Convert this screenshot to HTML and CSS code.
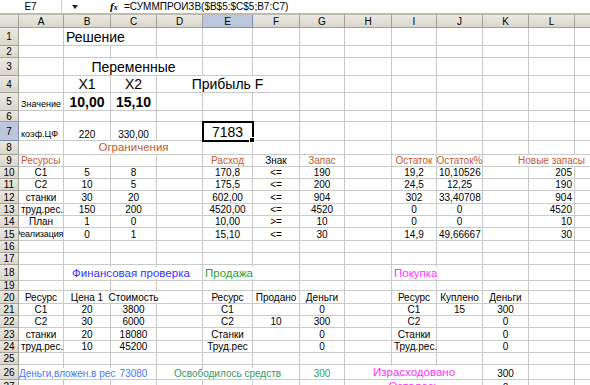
FILE: index.html
```html
<!DOCTYPE html>
<html lang="ru">
<head>
  <meta charset="UTF-8">
  <title>Решение</title>
  <link rel="stylesheet" href="styles.css">
</head>
<body>
  <div class="fbar">
    <div class="namebox">E7</div>
    <div class="drop"><svg width="6" height="4" viewBox="0 0 6 4"><path d="M0 0h6L3 4z" fill="#222"/></svg></div>
    <div class="fx">f<span>x</span></div>
    <div class="formula">=СУММПРОИЗВ($B$5:$C$5;B7:C7)</div>
  </div>

  <table class="sheet">
    <colgroup>
      <col class="w19"><col class="w45"><col class="w47"><col class="w46"><col class="w46"><col class="w50"><col class="w47">
      <col class="w45"><col class="w47"><col class="w45"><col class="w46"><col class="w46"><col class="w46"><col class="w46">
    </colgroup>
    <tr class="hd"><th></th><th>A</th><th>B</th><th>C</th><th>D</th><th class="on">E</th><th>F</th><th>G</th><th>H</th><th>I</th><th>J</th><th>K</th><th>L</th><th></th></tr>
    <tr class="h18"><th>1</th><td></td><td class="big"><span class="x">Решение</span></td><td></td><td></td><td></td><td></td><td></td><td></td><td></td><td></td><td></td><td></td><td></td></tr>
    <tr class="h12"><th>2</th><td></td><td></td><td></td><td></td><td></td><td></td><td></td><td></td><td></td><td></td><td></td><td></td><td></td></tr>
    <tr class="h18"><th>3</th><td></td><td></td><td class="c big"><span class="ov">Переменные</span></td><td></td><td></td><td></td><td></td><td></td><td></td><td></td><td></td><td></td><td></td></tr>
    <tr class="h17"><th>4</th><td></td><td class="c big">X1</td><td class="c big">X2</td><td></td><td class="c big"><span class="ov">Прибыль F</span></td><td></td><td></td><td></td><td></td><td></td><td></td><td></td><td></td></tr>
    <tr class="h18"><th>5</th><td class="sm">Значение</td><td class="c big b">10,00</td><td class="c big b">15,10</td><td></td><td></td><td></td><td></td><td></td><td></td><td></td><td></td><td></td><td></td></tr>
    <tr class="h11"><th>6</th><td></td><td></td><td></td><td></td><td></td><td></td><td></td><td></td><td></td><td></td><td></td><td></td><td></td></tr>
    <tr class="h19"><th class="on">7</th><td class="sm">коэф.ЦФ</td><td class="c">220</td><td class="c">330,00</td><td></td><td class="c big sel">7183</td><td></td><td></td><td></td><td></td><td></td><td></td><td></td><td></td></tr>
    <tr class="h14"><th>8</th><td></td><td></td><td class="c md br"><span class="ov">Ограничения</span></td><td></td><td></td><td></td><td></td><td></td><td></td><td></td><td></td><td></td><td></td></tr>
    <tr class="h12"><th>9</th><td class="br">Ресурсы</td><td></td><td></td><td></td><td class="c br">Расход</td><td class="c">Знак</td><td class="c br">Запас</td><td></td><td class="c br">Остаток</td><td class="c br"><span class="ov">Остаток%</span></td><td></td><td class="c br"><span class="ov">Новые запасы</span></td><td></td></tr>
    <tr class="h12"><th>10</th><td class="c">С1</td><td class="c">5</td><td class="c">8</td><td></td><td class="c">170,8</td><td class="c">&lt;=</td><td class="c">190</td><td></td><td class="c">19,2</td><td class="c">10,10526</td><td></td><td class="r">205</td><td></td></tr>
    <tr class="h12"><th>11</th><td class="c">С2</td><td class="c">10</td><td class="c">5</td><td></td><td class="c">175,5</td><td class="c">&lt;=</td><td class="c">200</td><td></td><td class="c">24,5</td><td class="c">12,25</td><td></td><td class="r">190</td><td></td></tr>
    <tr class="h13"><th>12</th><td class="c">станки</td><td class="c">30</td><td class="c">20</td><td></td><td class="c">602,00</td><td class="c">&lt;=</td><td class="c">904</td><td></td><td class="c">302</td><td class="c">33,40708</td><td></td><td class="r">904</td><td></td></tr>
    <tr class="h12"><th>13</th><td class="c">труд.рес.</td><td class="c">150</td><td class="c">200</td><td></td><td class="c">4520,00</td><td class="c">&lt;=</td><td class="c">4520</td><td></td><td class="c">0</td><td class="c">0</td><td></td><td class="r">4520</td><td></td></tr>
    <tr class="h12"><th>14</th><td class="c">План</td><td class="c">1</td><td class="c">0</td><td></td><td class="c">10,00</td><td class="c">&gt;=</td><td class="c">10</td><td></td><td class="c">0</td><td class="c">0</td><td></td><td class="r">10</td><td></td></tr>
    <tr class="h12"><th>15</th><td class="c clip"><span class="ov">Реализация</span></td><td class="c">0</td><td class="c">1</td><td></td><td class="c">15,10</td><td class="c">&lt;=</td><td class="c">30</td><td></td><td class="c">14,9</td><td class="c">49,66667</td><td></td><td class="r">30</td><td></td></tr>
    <tr class="h12"><th>16</th><td></td><td></td><td></td><td></td><td></td><td></td><td></td><td></td><td></td><td></td><td></td><td></td><td></td></tr>
    <tr class="h12"><th>17</th><td></td><td></td><td></td><td></td><td></td><td></td><td></td><td></td><td></td><td></td><td></td><td></td><td></td></tr>
    <tr class="h16"><th>18</th><td></td><td class="md bl ind"><span class="x">Финансовая проверка</span></td><td></td><td></td><td class="md gr"><span class="x">Продажа</span></td><td></td><td></td><td></td><td class="md mg"><span class="x">Покупка</span></td><td></td><td></td><td></td><td></td></tr>
    <tr class="h10"><th>19</th><td></td><td></td><td></td><td></td><td></td><td></td><td></td><td></td><td></td><td></td><td></td><td></td><td></td></tr>
    <tr class="h13"><th>20</th><td class="c">Ресурс</td><td class="c">Цена 1</td><td class="c"><span class="ov">Стоимость</span></td><td></td><td class="c">Ресурс</td><td class="c">Продано</td><td class="c">Деньги</td><td></td><td class="c">Ресурс</td><td class="c">Куплено</td><td class="c">Деньги</td><td></td><td></td></tr>
    <tr class="h12"><th>21</th><td class="c">С1</td><td class="c">20</td><td class="c">3800</td><td></td><td class="c">С1</td><td></td><td class="c">0</td><td></td><td class="c">С1</td><td class="c">15</td><td class="c">300</td><td></td><td></td></tr>
    <tr class="h12"><th>22</th><td class="c">С2</td><td class="c">30</td><td class="c">6000</td><td></td><td class="c">С2</td><td class="c">10</td><td class="c">300</td><td></td><td class="c">С2</td><td></td><td class="c">0</td><td></td><td></td></tr>
    <tr class="h13"><th>23</th><td class="c">станки</td><td class="c">20</td><td class="c">18080</td><td></td><td class="c">Станки</td><td></td><td class="c">0</td><td></td><td class="c">Станки</td><td></td><td class="c">0</td><td></td><td></td></tr>
    <tr class="h12"><th>24</th><td class="c">труд.рес.</td><td class="c">10</td><td class="c">45200</td><td></td><td class="c">Труд.рес</td><td></td><td class="c">0</td><td></td><td class="c">Труд.рес.</td><td></td><td class="c">0</td><td></td><td></td></tr>
    <tr class="h12"><th>25</th><td></td><td></td><td></td><td></td><td></td><td></td><td></td><td></td><td></td><td></td><td></td><td></td><td></td></tr>
    <tr class="h15"><th>26</th><td class="lb flush"><span class="x">Деньги,вложен.в рес</span></td><td></td><td class="c lb">73080</td><td></td><td class="c sg"><span class="ov">Освободилось средств</span></td><td></td><td class="c sg">300</td><td></td><td class="c md mg"><span class="ov">Израсходовано</span></td><td></td><td class="c">300</td><td></td><td></td></tr>
    <tr class="h12"><th>27</th><td></td><td></td><td></td><td></td><td></td><td></td><td></td><td></td><td class="c md mg"><span class="ov">Осталось</span></td><td></td><td class="c">0</td><td></td><td></td></tr>
  </table>
</body>
</html>
```

FILE: styles.css
```css
html, body {
  margin: 0;
  width: 590px;
  height: 385px;
  overflow: hidden;
  background: #fff;
  color: #000;
  font-family: "Liberation Sans", Arial, sans-serif;
  font-size: 10px;
}

/* строка формул */
.fbar {
  display: flex;
  height: 13px;
  line-height: 13px;
  border-bottom: 2px solid #bdbab0;
  background: #fff;
}

.namebox {
  width: 62px;
  text-align: center;
  border-right: 1px solid #d0cdc4;
  box-sizing: border-box;
}

.drop {
  width: 26px;
  display: flex;
  justify-content: center;
  align-items: center;
}

.fx {
  margin-left: 22px;
  width: 12px;
  font-family: "Liberation Serif", serif;
  font-style: italic;
  font-weight: bold;
  font-size: 11px;
}

.fx span { font-size: 8px; }

.formula {
  padding-left: 2px;
}

/* лист */
.sheet {
  border-collapse: separate;
  border-spacing: 0;
  table-layout: fixed;
  width: 621px;
}

.w19 { width: 19px; }
.w45 { width: 45px; }
.w46 { width: 46px; }
.w47 { width: 47px; }
.w50 { width: 50px; }

.sheet th {
  background: linear-gradient(#ebe9e2, #d9d6cc);
  border-right: 1px solid #a3a199;
  border-bottom: 1px solid #a3a199;
  font-weight: normal;
  font-size: 10px;
  line-height: 9px;
  text-align: center;
  vertical-align: middle;
  padding: 0;
  box-sizing: border-box;
}

.sheet th.on {
  background: #bcc6dd;
  border-color: #7f8db0;
}

.sheet td {
  padding: 0 2px;
  border-right: 1px solid #cacaca;
  border-bottom: 1px solid #cacaca;
  white-space: nowrap;
  vertical-align: bottom;
  line-height: 11px;
  box-sizing: border-box;
}

.hd th { height: 13px; }
.h10 td, .h10 th { height: 10px; }
.h11 td, .h11 th { height: 11px; }
.h12 td, .h12 th { height: 12px; }
.h13 td, .h13 th { height: 13px; }
.h14 td, .h14 th { height: 14px; }
.h15 td, .h15 th { height: 15px; }
.h16 td, .h16 th { height: 16px; }
.h17 td, .h17 th { height: 17px; }
.h18 td, .h18 th { height: 18px; }
.h19 td, .h19 th { height: 19px; }

.c { text-align: center; }
.r { text-align: right; }
.b { font-weight: bold; }

.sheet .big { font-size: 14px; line-height: 16px; }
.sheet .md { font-size: 11.5px; line-height: 13px; }
.sheet .sm { font-size: 9px; }
.sheet .ind { padding-left: 8px; }
.sheet .flush { padding-left: 0; }

.clip { overflow: hidden; }
.clip .ov {
  margin: 0 -78px 0 -82px;
  font-size: 9px;
  letter-spacing: -0.15px;
}

/* текст, который вылезает в соседние пустые ячейки */
.x { background: #fff; }
.ov {
  display: inline-block;
  margin: 0 -80px;
  background: #fff;
}

.br { color: #c35a32; }
.bl { color: #3333ff; }
.lb { color: #4a78ff; }
.gr { color: #2f9e2f; }
.sg { color: #339966; }
.mg { color: #ff33ff; }

/* выделенная ячейка E7 */
.sel {
  position: relative;
  outline: 2px solid #000;
  outline-offset: -1px;
}

.sel::after {
  content: "";
  position: absolute;
  right: -3px;
  bottom: -3px;
  width: 4px;
  height: 4px;
  background: #000;
  border: 1px solid #fff;
}
```
